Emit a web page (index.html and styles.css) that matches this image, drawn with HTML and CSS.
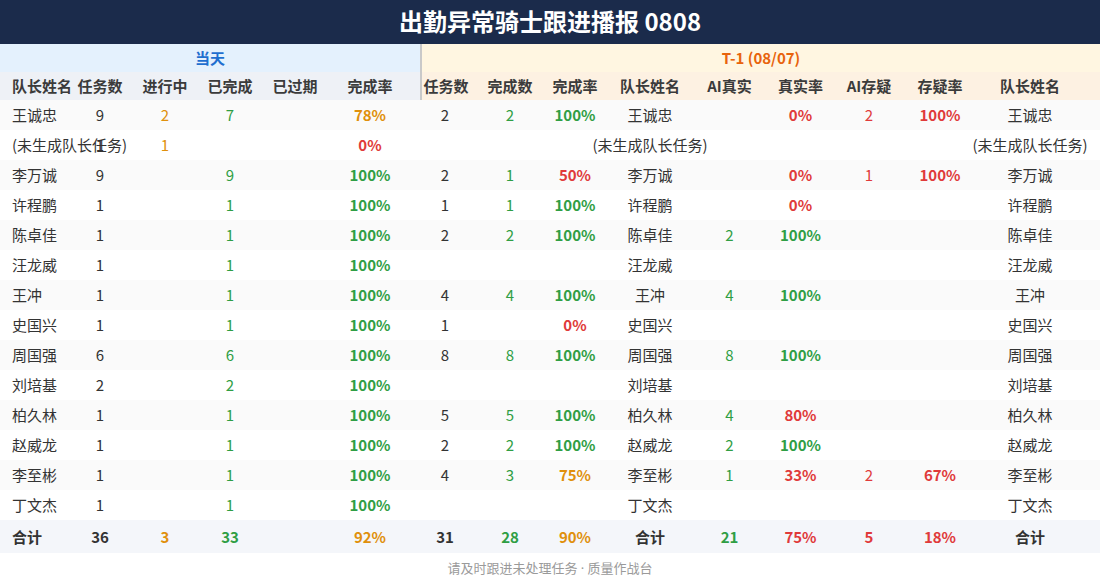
FILE: index.html
```html
<!DOCTYPE html>
<html lang="zh-CN">
<head>
<meta charset="utf-8">
<title>出勤异常骑士跟进播报 0808</title>
<link rel="stylesheet" href="styles.css">
</head>
<body>
<div class="page">
  <header class="title">出勤异常骑士跟进播报 0808</header>
  <div class="table">
    <div class="group-row">
      <div class="g-today">当天</div>
      <div class="g-t1">T-1 (08/07)</div>
    </div>
    <div class="row head">
      <div class="c name l">队长姓名</div>
      <div class="c l">任务数</div>
      <div class="c l">进行中</div>
      <div class="c l">已完成</div>
      <div class="c l">已过期</div>
      <div class="c l pad12">完成率</div>
      <div class="c r div">任务数</div>
      <div class="c r">完成数</div>
      <div class="c r">完成率</div>
      <div class="c r">队长姓名</div>
      <div class="c r">AI真实</div>
      <div class="c r">真实率</div>
      <div class="c r">AI存疑</div>
      <div class="c r">存疑率</div>
      <div class="c r pad24">队长姓名</div>
    </div>

    <div class="row odd">
      <div class="c name">王诚忠</div><div class="c">9</div><div class="c o">2</div><div class="c g">7</div><div class="c"></div><div class="c pad12 b o">78%</div>
      <div class="c">2</div><div class="c g">2</div><div class="c b g">100%</div><div class="c">王诚忠</div><div class="c"></div><div class="c b rd">0%</div><div class="c rd">2</div><div class="c b rd">100%</div><div class="c pad24">王诚忠</div>
    </div>
    <div class="row">
      <div class="c name">(未生成队长任务)</div><div class="c">1</div><div class="c o">1</div><div class="c"></div><div class="c"></div><div class="c pad12 b rd">0%</div>
      <div class="c"></div><div class="c"></div><div class="c"></div><div class="c">(未生成队长任务)</div><div class="c"></div><div class="c"></div><div class="c"></div><div class="c"></div><div class="c pad24">(未生成队长任务)</div>
    </div>
    <div class="row odd">
      <div class="c name">李万诚</div><div class="c">9</div><div class="c"></div><div class="c g">9</div><div class="c"></div><div class="c pad12 b g">100%</div>
      <div class="c">2</div><div class="c g">1</div><div class="c b rd">50%</div><div class="c">李万诚</div><div class="c"></div><div class="c b rd">0%</div><div class="c rd">1</div><div class="c b rd">100%</div><div class="c pad24">李万诚</div>
    </div>
    <div class="row">
      <div class="c name">许程鹏</div><div class="c">1</div><div class="c"></div><div class="c g">1</div><div class="c"></div><div class="c pad12 b g">100%</div>
      <div class="c">1</div><div class="c g">1</div><div class="c b g">100%</div><div class="c">许程鹏</div><div class="c"></div><div class="c b rd">0%</div><div class="c"></div><div class="c"></div><div class="c pad24">许程鹏</div>
    </div>
    <div class="row odd">
      <div class="c name">陈卓佳</div><div class="c">1</div><div class="c"></div><div class="c g">1</div><div class="c"></div><div class="c pad12 b g">100%</div>
      <div class="c">2</div><div class="c g">2</div><div class="c b g">100%</div><div class="c">陈卓佳</div><div class="c g">2</div><div class="c b g">100%</div><div class="c"></div><div class="c"></div><div class="c pad24">陈卓佳</div>
    </div>
    <div class="row">
      <div class="c name">汪龙威</div><div class="c">1</div><div class="c"></div><div class="c g">1</div><div class="c"></div><div class="c pad12 b g">100%</div>
      <div class="c"></div><div class="c"></div><div class="c"></div><div class="c">汪龙威</div><div class="c"></div><div class="c"></div><div class="c"></div><div class="c"></div><div class="c pad24">汪龙威</div>
    </div>
    <div class="row odd">
      <div class="c name">王冲</div><div class="c">1</div><div class="c"></div><div class="c g">1</div><div class="c"></div><div class="c pad12 b g">100%</div>
      <div class="c">4</div><div class="c g">4</div><div class="c b g">100%</div><div class="c">王冲</div><div class="c g">4</div><div class="c b g">100%</div><div class="c"></div><div class="c"></div><div class="c pad24">王冲</div>
    </div>
    <div class="row">
      <div class="c name">史国兴</div><div class="c">1</div><div class="c"></div><div class="c g">1</div><div class="c"></div><div class="c pad12 b g">100%</div>
      <div class="c">1</div><div class="c"></div><div class="c b rd">0%</div><div class="c">史国兴</div><div class="c"></div><div class="c"></div><div class="c"></div><div class="c"></div><div class="c pad24">史国兴</div>
    </div>
    <div class="row odd">
      <div class="c name">周国强</div><div class="c">6</div><div class="c"></div><div class="c g">6</div><div class="c"></div><div class="c pad12 b g">100%</div>
      <div class="c">8</div><div class="c g">8</div><div class="c b g">100%</div><div class="c">周国强</div><div class="c g">8</div><div class="c b g">100%</div><div class="c"></div><div class="c"></div><div class="c pad24">周国强</div>
    </div>
    <div class="row">
      <div class="c name">刘培基</div><div class="c">2</div><div class="c"></div><div class="c g">2</div><div class="c"></div><div class="c pad12 b g">100%</div>
      <div class="c"></div><div class="c"></div><div class="c"></div><div class="c">刘培基</div><div class="c"></div><div class="c"></div><div class="c"></div><div class="c"></div><div class="c pad24">刘培基</div>
    </div>
    <div class="row odd">
      <div class="c name">柏久林</div><div class="c">1</div><div class="c"></div><div class="c g">1</div><div class="c"></div><div class="c pad12 b g">100%</div>
      <div class="c">5</div><div class="c g">5</div><div class="c b g">100%</div><div class="c">柏久林</div><div class="c g">4</div><div class="c b rd">80%</div><div class="c"></div><div class="c"></div><div class="c pad24">柏久林</div>
    </div>
    <div class="row">
      <div class="c name">赵威龙</div><div class="c">1</div><div class="c"></div><div class="c g">1</div><div class="c"></div><div class="c pad12 b g">100%</div>
      <div class="c">2</div><div class="c g">2</div><div class="c b g">100%</div><div class="c">赵威龙</div><div class="c g">2</div><div class="c b g">100%</div><div class="c"></div><div class="c"></div><div class="c pad24">赵威龙</div>
    </div>
    <div class="row odd">
      <div class="c name">李至彬</div><div class="c">1</div><div class="c"></div><div class="c g">1</div><div class="c"></div><div class="c pad12 b g">100%</div>
      <div class="c">4</div><div class="c g">3</div><div class="c b o">75%</div><div class="c">李至彬</div><div class="c g">1</div><div class="c b rd">33%</div><div class="c rd">2</div><div class="c b rd">67%</div><div class="c pad24">李至彬</div>
    </div>
    <div class="row">
      <div class="c name">丁文杰</div><div class="c">1</div><div class="c"></div><div class="c g">1</div><div class="c"></div><div class="c pad12 b g">100%</div>
      <div class="c"></div><div class="c"></div><div class="c"></div><div class="c">丁文杰</div><div class="c"></div><div class="c"></div><div class="c"></div><div class="c"></div><div class="c pad24">丁文杰</div>
    </div>
    <div class="row total">
      <div class="c name">合计</div><div class="c">36</div><div class="c o">3</div><div class="c g">33</div><div class="c"></div><div class="c pad12 o">92%</div>
      <div class="c">31</div><div class="c g">28</div><div class="c o">90%</div><div class="c">合计</div><div class="c g">21</div><div class="c rd">75%</div><div class="c rd">5</div><div class="c rd">18%</div><div class="c pad24">合计</div>
    </div>
  </div>
  <footer class="foot">请及时跟进未处理任务 · 质量作战台</footer>
</div>
</body>
</html>
```

FILE: styles.css
```css
* { box-sizing: border-box; }
html, body { margin: 0; padding: 0; background: #ffffff; }
body {
  font-family: "Noto Sans CJK SC", "Noto Sans", sans-serif;
  color: #333333;
  font-size: 15px;
}
.page { width: 1100px; }
.title {
  height: 44px;
  line-height: 42px;
  background: #1b2b4b;
  color: #ffffff;
  font-size: 24px;
  font-weight: 700;
  text-align: center;
}
.group-row {
  display: grid;
  grid-template-columns: 420px 680px;
  height: 28px;
  font-weight: 700;
  font-size: 15px;
}
.g-today {
  background: #e4f1fd;
  color: #1f6fcf;
  display: flex;
  align-items: center;
  justify-content: center;
  padding-bottom: 1px;
}
.g-t1 {
  background: #fff6e1;
  color: #e8630c;
  display: flex;
  align-items: center;
  justify-content: center;
  border-left: 2px solid #c9c9c9;
  padding-bottom: 1px;
}
.row {
  display: grid;
  grid-template-columns: 72px 56px 74px 56px 74px 88px 50px 80px 50px 100px 59px 83px 54px 88px 116px;
  height: 30px;
}
.row.odd { background: #fafafa; }
.c {
  display: flex;
  align-items: center;
  justify-content: center;
  white-space: nowrap;
  min-width: 0;
  padding-bottom: 1px;
}
.c.name { justify-content: flex-start; padding-left: 12px; }
.pad12 { padding-right: 12px; }
.pad24 { padding-right: 24px; }
.head { height: 28px; font-weight: 700; color: #3b3b3b; }
.head .l { background: #eef1f6; }
.head .r { background: #fdf1e2; }
.head .div { border-left: 2px solid #c9c9c9; }
.b { font-weight: 700; }
.g { color: #2f9e44; }
.o { color: #e0900c; }
.rd { color: #e03a3a; }
.row.total {
  height: 33px;
  background: #f4f6fa;
  font-weight: 700;
}
.foot {
  height: 33px;
  line-height: 31px;
  text-align: center;
  color: #9a9a9a;
  font-size: 13px;
  font-family: "Noto Sans", "Noto Sans CJK SC", sans-serif;
}
```
